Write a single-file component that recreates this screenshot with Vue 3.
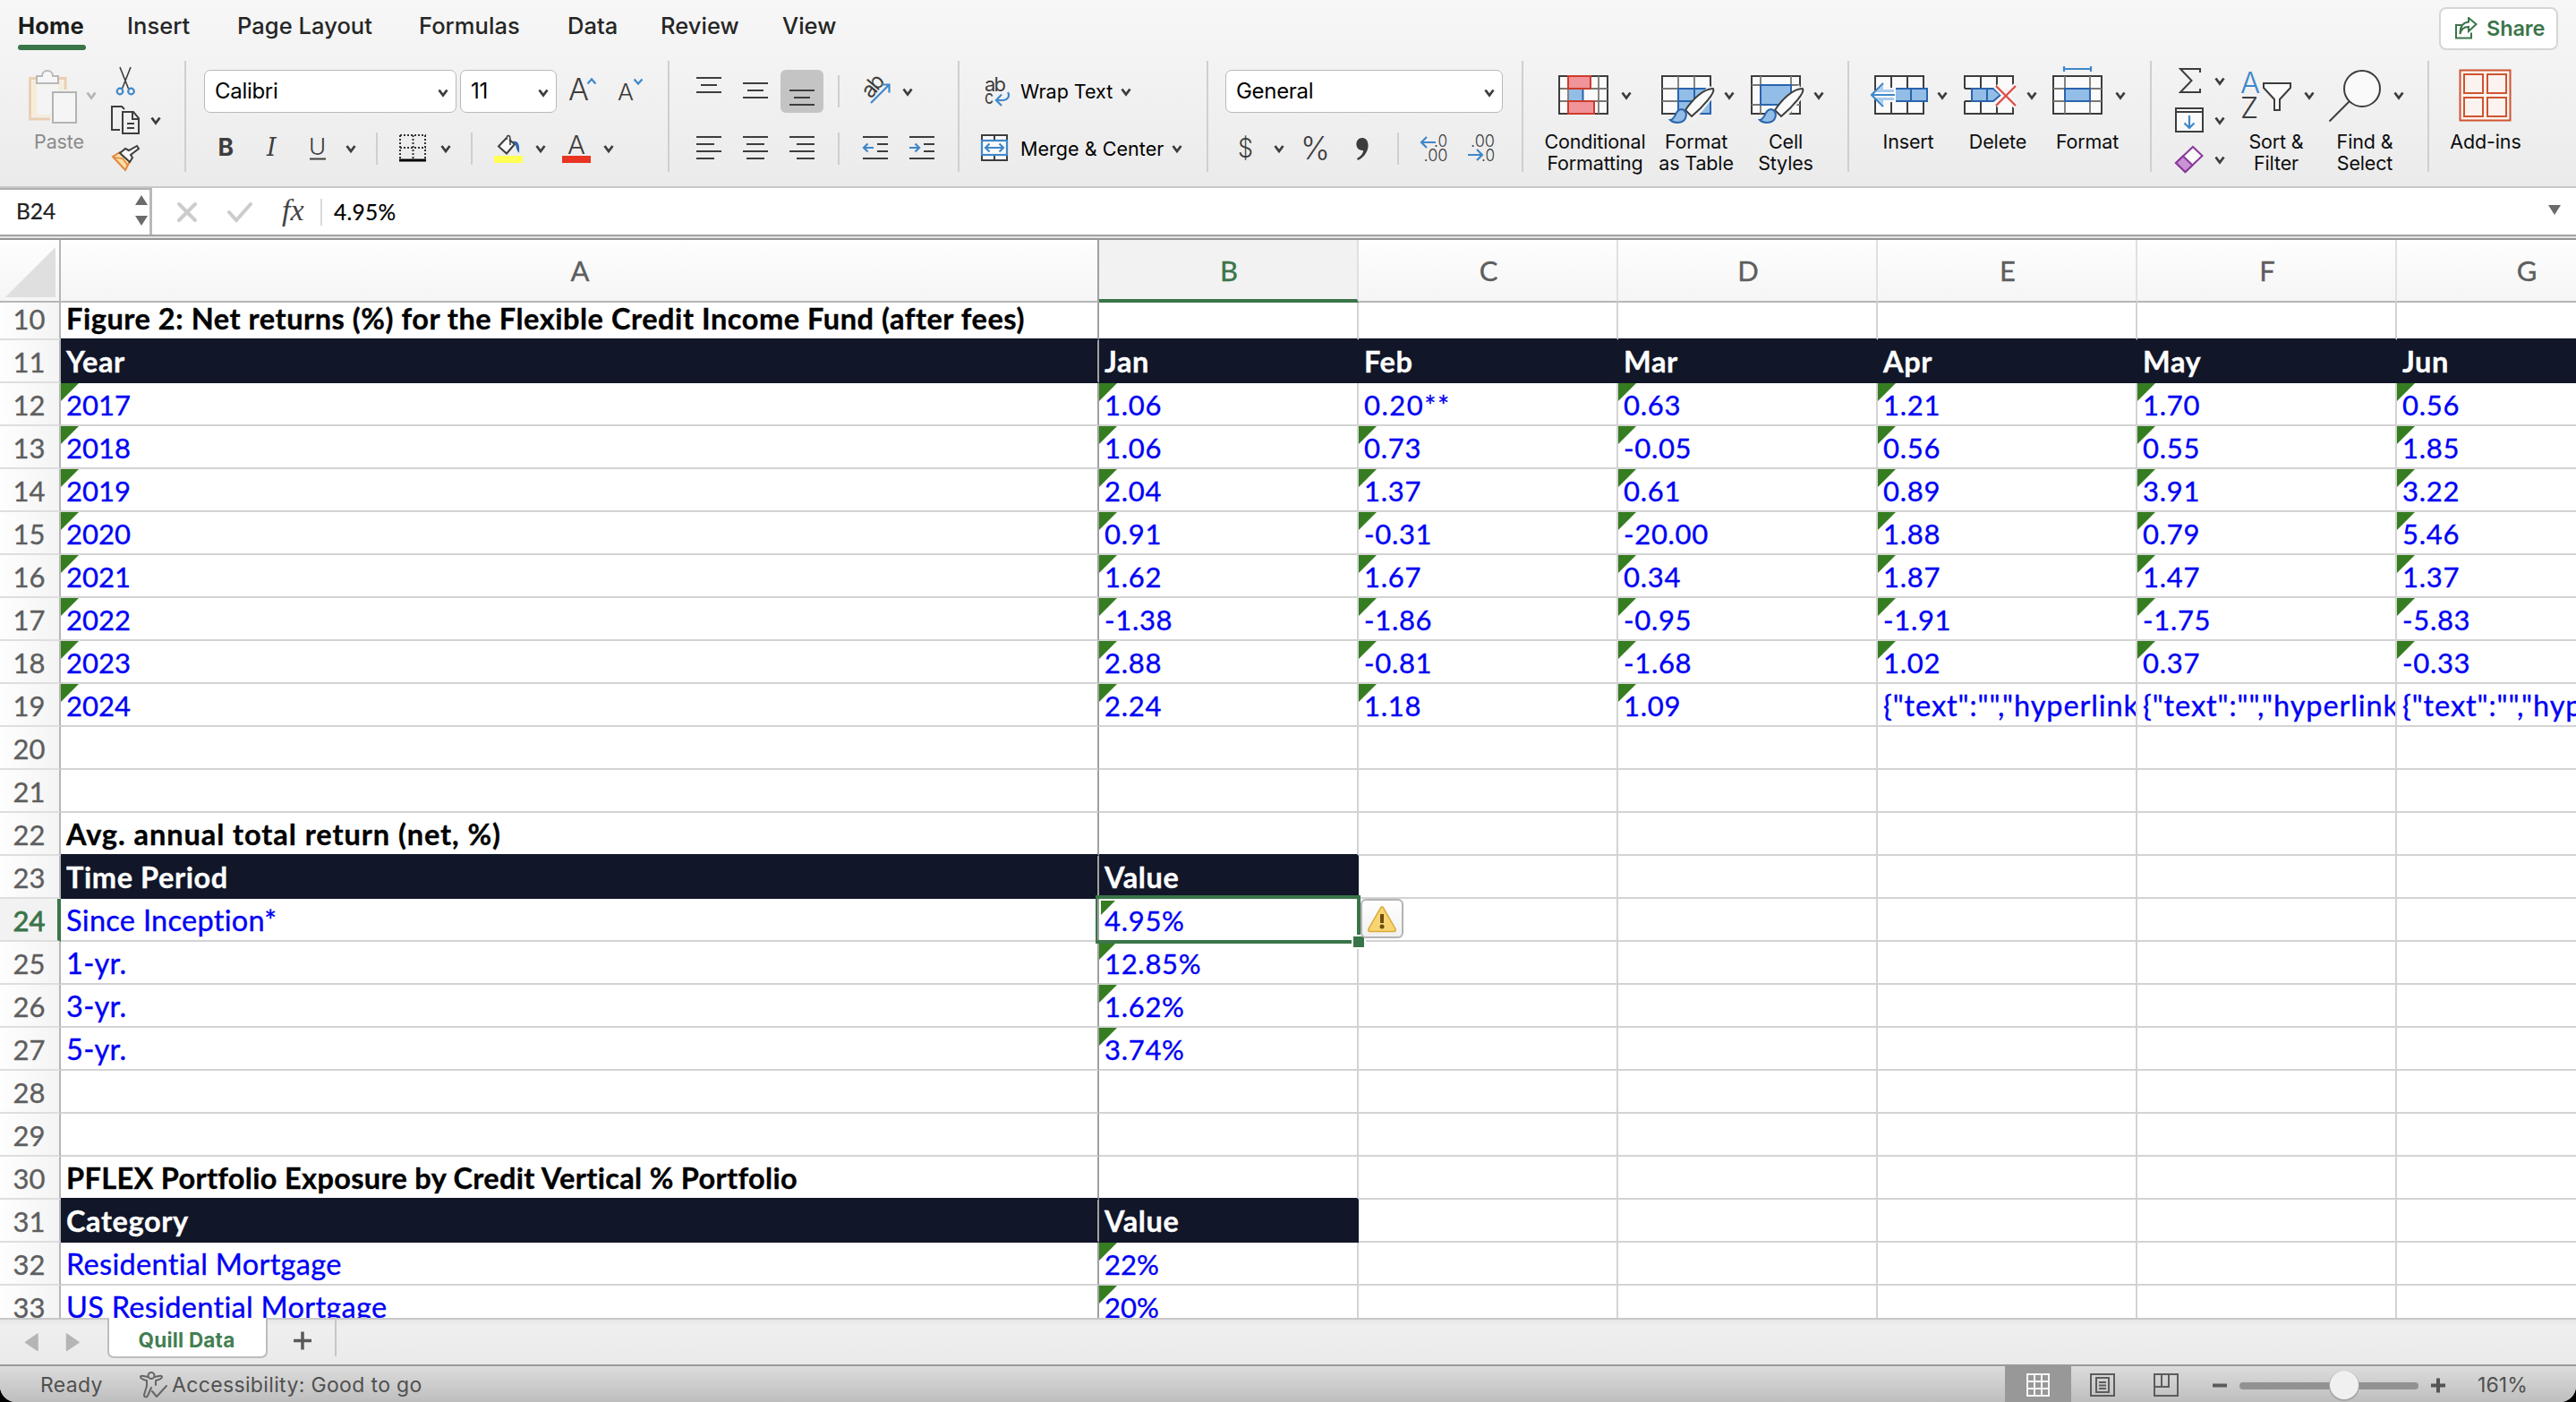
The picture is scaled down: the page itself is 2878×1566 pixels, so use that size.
<script setup>
import { h } from 'vue'

// Icon cell: the box is "x y width height" in toolbar coordinates
const Ico = (props, { slots }) => {
  const [, , width, height] = props.box.split(' ')
  return h('svg', { viewBox: props.box, width, height }, slots.default?.())
}
Ico.props = ['box']

const chev = (x, y) => `M${x + 1.5} ${y + 1}l4.5 6 4.5-6`

const tabs = ['Home', 'Insert', 'Page Layout', 'Formulas', 'Data', 'Review', 'View']
const columns = ['A', 'B', 'C', 'D', 'E', 'F', 'G']
const link = '{"text":"","hyperlink":""}'

const content = {
  10: ['Figure 2: Net returns (%) for the Flexible Credit Income Fund (after fees)'],
  11: ['Year', 'Jan', 'Feb', 'Mar', 'Apr', 'May', 'Jun'],
  12: ['2017', '1.06', '0.20**', '0.63', '1.21', '1.70', '0.56'],
  13: ['2018', '1.06', '0.73', '-0.05', '0.56', '0.55', '1.85'],
  14: ['2019', '2.04', '1.37', '0.61', '0.89', '3.91', '3.22'],
  15: ['2020', '0.91', '-0.31', '-20.00', '1.88', '0.79', '5.46'],
  16: ['2021', '1.62', '1.67', '0.34', '1.87', '1.47', '1.37'],
  17: ['2022', '-1.38', '-1.86', '-0.95', '-1.91', '-1.75', '-5.83'],
  18: ['2023', '2.88', '-0.81', '-1.68', '1.02', '0.37', '-0.33'],
  19: ['2024', '2.24', '1.18', '1.09', link, link, link],
  22: ['Avg. annual total return (net, %)'],
  23: ['Time Period', 'Value'],
  24: ['Since Inception*', '4.95%'],
  25: ['1-yr.', '12.85%'],
  26: ['3-yr.', '1.62%'],
  27: ['5-yr.', '3.74%'],
  30: ['PFLEX Portfolio Exposure by Credit Vertical % Portfolio'],
  31: ['Category', 'Value'],
  32: ['Residential Mortgage', '22%'],
  33: ['US Residential Mortgage', '20%'],
}
const titles = { 10: 'title', 22: 'title loose', 30: 'title tight' }
const heads = { 11: 7, 23: 2, 31: 2 }

const kind = (text) => {
  if (text === link) return 'link'
  if (text.endsWith('**')) return 'noted'
  if (/^-?\d*\.\d+%?$/.test(text)) return 'dec'
  return /^\d+%?$/.test(text) ? 'int' : 'words'
}

const rows = Array.from({ length: 24 }, (_, i) => {
  const n = i + 10
  return {
    n,
    title: titles[n],
    cells: columns.map((_, c) => {
      const text = content[n]?.[c] ?? ''
      return {
        text,
        kind: kind(text),
        dark: c < (heads[n] ?? 0),
        above: c < (heads[n + 1] ?? 0),
        flag: /^-?[\d.]+%?$/.test(text),
        active: n === 24 && c === 1,
      }
    }),
  }
})
</script>

<template>
  <div class="window">
    <header class="top">
      <nav class="tabs">
        <span v-for="(t, i) in tabs" :key="t" :class="{ on: i === 0 }">{{ t }}</span>
      </nav>
      <button class="share">
        <Ico box="2743 20 26 26">
          <path class="g" d="M2750 29h-6v14.500h17v-6" />
          <path class="g" d="M2748.500 39c1-6 4-8 9.500-8v5l8.500-8-8.500-7v4.500c-7 .5-9.500 6-9.500 13.500z" />
        </Ico>
        <span>Share</span>
      </button>
    </header>

    <div class="ribbon">
      <section class="group g1">
        <div class="big paste">
          <Ico box="0 68 112 78">
            <path d="M36 90h34v10H58v30H36z" fill="#f7ecd8" />
            <path d="M41 87.500h-7.500V133H56M65 87.500h8V100" fill="none" stroke="#ebcfb0" stroke-width="3" />
            <rect x="41" y="92" width="24" height="36" fill="#f4f4f4" />
            <path d="M41 93v-8h6c0-8 12-8 12 0h6v8z" fill="#f6f6f6" stroke="#b9b9b9" stroke-width="2" />
            <rect x="59" y="103" width="26" height="34" fill="#f5f5f5" stroke="#b3b3b3" stroke-width="2" />
            <path class="ch off" :d="chev(96, 102.5)" />
          </Ico>
          <span>Paste</span>
        </div>
        <div class="stack">
          <Ico box="112 68 94 44">
            <path class="k" d="M134 75l9.500 24M146 75l-9.500 24" />
            <circle class="b" cx="134" cy="102" r="3.300" /><circle class="b" cx="146.500" cy="102" r="3.300" />
          </Ico>
          <Ico box="112 112 94 44">
            <path class="k w" d="M134 145h-9v-26h11l3 3M137 125h12l6 7v17h-18zM148 125v8h7M142 138h8M142 143h8" />
            <path class="ch" :d="chev(168, 130.500)" />
          </Ico>
          <Ico box="112 156 94 38">
            <path d="M126 175l14 15 6-12-12-8z" fill="#f9dfa6" stroke="#e3873c" stroke-width="2" />
            <path d="M127 176l10 1 6 8" fill="none" stroke="#e3873c" stroke-width="1.500" />
            <path d="M134 171l11 10 3-5-2-3 9-7-2-3-9 5-4-2z" class="k w" fill="#fafafa" />
          </Ico>
        </div>
      </section>

      <section class="group g2">
        <div class="row">
          <div class="select font"><span>Calibri</span><Ico box="484 78 22 46"><path class="ch" :d="chev(489, 98.500)" /></Ico></div>
          <div class="select size"><span>11</span><Ico box="596 78 22 46"><path class="ch" :d="chev(601, 98.500)" /></Ico></div>
          <Ico box="622 78 124 48">
            <text x="635" y="112" font-size="34" textLength="23" lengthAdjust="spacingAndGlyphs" class="lt">A</text>
            <path class="b" d="M656.500 93.500l4.500-5 4.500 5" />
            <text x="690" y="112" font-size="26" class="lt" textLength="18" lengthAdjust="spacingAndGlyphs">A</text>
            <path class="b" d="M708.500 88.500l4.500 5 4.500-5" />
          </Ico>
        </div>
        <div class="row">
          <Ico box="208 142 70 48"><text x="243.500" y="174" font-size="26.500" font-weight="700">B</text></Ico>
          <Ico box="278 142 50 48"><text x="298" y="174" font-size="27" class="se" font-style="italic">I</text></Ico>
          <Ico box="328 142 76 48">
            <text x="345" y="172.500" font-size="26" class="lt">U</text><path class="k w" d="M346 177.500h18" />
            <path class="ch" :d="chev(386, 162)" />
          </Ico>
          <Ico box="404 142 112 48">
            <path class="sep" d="M421 148v36" />
            <path d="M447 151h29M447 165h29M447 151v26M461.500 151v26M475 151v26" fill="none" stroke="#333" stroke-width="2" stroke-dasharray="2 2" />
            <path d="M446 179h30" stroke="#000" stroke-width="3" />
            <path class="ch" :d="chev(492, 162)" />
          </Ico>
          <Ico box="516 142 108 48">
            <path class="sep" d="M527 148v36" />
            <path class="k w" d="M566 154l-9 9.500 9 8 9-10.500-6-5" fill="#fafafa" />
            <path class="k" d="M566 156c0-6 4-6 4 0v6" />
            <path d="M573 158c5-1 8 2 7 13-3-3-3-6-4-9z" fill="#2a64ad" />
            <rect x="552" y="174" width="32" height="8" fill="#ffff54" />
            <path class="ch" :d="chev(598, 162)" />
          </Ico>
          <Ico box="624 142 122 48">
            <text x="634" y="172" font-size="29" class="lt" textLength="20" lengthAdjust="spacingAndGlyphs">A</text>
            <rect x="628" y="174" width="32" height="8" fill="#e93323" />
            <path class="ch" :d="chev(674, 162)" />
          </Ico>
        </div>
      </section>

      <section class="group g3">
        <div class="row">
          <Ico box="748 78 70 48"><path class="k w" d="M778 87h28M783 95h18M778 103h28" /></Ico>
          <Ico box="818 78 54 48"><path class="k w" d="M830 93h28M835 101h18M830 109h28" /></Ico>
          <Ico box="872 78 48 48" class="pressed"><path class="k w" d="M882 101h28M887 109h18M882 117h28" /></Ico>
          <Ico box="920 78 150 48">
            <path class="sep" d="M937 84v36" />
            <text transform="translate(973 111) rotate(-50)" font-size="24" textLength="26" class="md">ab</text>
            <path class="b" d="M973 115l20-20M985 94.500h8.500v9" />
            <path class="ch" :d="chev(1008, 98.500)" />
          </Ico>
        </div>
        <div class="row">
          <Ico box="748 142 70 48"><path class="k w" d="M778 153h28M778 161h20M778 169h28M778 177h20" /></Ico>
          <Ico box="818 142 54 48"><path class="k w" d="M830 153h28M834 161h20M830 169h28M834 177h20" /></Ico>
          <Ico box="872 142 48 48"><path class="k w" d="M882 153h28M890 161h20M882 169h28M890 177h20" /></Ico>
          <Ico box="920 142 82 48">
            <path class="sep" d="M937 148v36" />
            <path class="k w" d="M964 153h28M980 161h12M980 169h12M964 177h28" />
            <path class="b" d="M976 165h-11M969.500 160.500l-4.500 4.500 4.500 4.500" />
          </Ico>
          <Ico box="1002 142 68 48">
            <path class="k w" d="M1016 153h28M1032 161h12M1032 169h12M1016 177h28" />
            <path class="b" d="M1016 165h11M1022.500 160.500l4.500 4.500-4.500 4.500" />
          </Ico>
        </div>
      </section>

      <section class="group g4">
        <div class="row">
          <Ico box="1072 78 68 48">
            <text x="1100" y="101.500" font-size="22" class="md" textLength="24">ab</text>
            <text x="1100" y="116" font-size="22" class="md" textLength="10" lengthAdjust="spacingAndGlyphs">c</text>
            <path class="b" d="M1126 103c3 5-1 9-6 9h-7M1119 105.500l-6 6.500 6 6" />
          </Ico>
          <span class="txt wrap">Wrap Text</span>
          <Ico box="1247 78 24 48"><path class="ch" :d="chev(1252, 98.500)" /></Ico>
        </div>
        <div class="row">
          <Ico box="1072 142 68 48">
            <path class="k w" d="M1097 151h28v28h-28zM1111 151v28" fill="#fafafa" />
            <rect x="1097" y="157" width="28" height="16" class="b" fill="#fafafa" />
            <path class="b" d="M1101 165h20M1105.500 160.500l-4.500 4.500 4.500 4.500M1116.500 160.500l4.500 4.500-4.500 4.500" />
          </Ico>
          <span class="txt merge">Merge &amp; Center</span>
          <Ico box="1304 142 24 48"><path class="ch" :d="chev(1309, 162)" /></Ico>
        </div>
      </section>

      <section class="group g5">
        <div class="row">
          <div class="select num"><span>General</span><Ico box="1653 78 22 46"><path class="ch" :d="chev(1658, 98.500)" /></Ico></div>
        </div>
        <div class="row">
          <Ico box="1350 142 94 48">
            <text x="1383" y="176" font-size="30" class="lt" textLength="17" lengthAdjust="spacingAndGlyphs">$</text>
            <path class="ch" :d="chev(1423, 162)" />
          </Ico>
          <Ico box="1444 142 60 48"><text x="1453" y="178" font-size="35" class="lt" textLength="33" lengthAdjust="spacingAndGlyphs">%</text></Ico>
          <Ico box="1504 142 44 48"><path d="M1522 154c9 0 10 18-5 25l-1-2c5-3 7-6 7-9-10 1-10-14-1-14z" fill="#3d3d3d" /></Ico>
          <Ico box="1548 142 80 48">
            <path class="sep" d="M1562 148v36" />
            <text x="1617" y="163.500" text-anchor="end" font-size="18.500" class="lt" textLength="15" lengthAdjust="spacingAndGlyphs">.0</text>
            <text x="1617.500" y="180" text-anchor="end" font-size="18.500" class="lt" textLength="27" lengthAdjust="spacingAndGlyphs">.00</text>
            <path class="b" d="M1604 159h-16M1594 153l-6 6 6 6" />
          </Ico>
          <Ico box="1628 142 72 48">
            <text x="1670" y="163.500" text-anchor="end" font-size="18.500" class="lt" textLength="27" lengthAdjust="spacingAndGlyphs">.00</text>
            <text x="1670" y="180" text-anchor="end" font-size="18.500" class="lt" textLength="15" lengthAdjust="spacingAndGlyphs">.0</text>
            <path class="b" d="M1640 173h16M1650 167l6 6-6 6" />
          </Ico>
        </div>
      </section>

      <section class="group g6">
        <div class="big cond">
          <Ico box="1712 68 140 78">
            <rect x="1742" y="85" width="54" height="42" class="k w" fill="#fafafa" />
            <path class="gr" d="M1752 85v42M1786 85v42M1743 99h53M1743 113h53" />
            <rect x="1769" y="100" width="16" height="12" fill="#fafafa" />
            <rect x="1753" y="100" width="15" height="12" fill="#92bde7" /><path d="M1768.500 99v14" stroke="#2a64ad" stroke-width="2" />
            <rect x="1752" y="85" width="25" height="14" class="rd" /><rect x="1752" y="113" width="29" height="14" class="rd" />
            <path class="ch" :d="chev(1811, 102.500)" />
          </Ico>
          <span>Conditional<br>Formatting</span>
        </div>
        <div class="big astable">
          <Ico box="1850 68 90 78">
            <rect x="1857" y="85" width="54" height="42" class="k w" fill="#fafafa" />
            <path class="gr" d="M1875 85v42M1893 85v42M1857 99h54M1857 113h54" />
            <path d="M1875 99h36v28h-36zM1893 99v28M1875 113h36" class="bl" />
            <path class="halo" d="M1914 99l-27 33" />
            <path class="k w" d="M1883 123c8-12 20-24 31-24 3 4-11 20-24 31z" fill="#fafafa" />
            <path d="M1866 134c7-1 5-12 13-12 8 2 6 15-5 15-4 0-7-2-8-3z" class="bl" />
            <path class="ch" :d="chev(1926, 102.500)" />
          </Ico>
          <span>Format<br>as Table</span>
        </div>
        <div class="big styles">
          <Ico box="1950 68 90 78">
            <rect x="1957" y="85" width="54" height="42" class="k w" fill="#fafafa" />
            <path class="gr" d="M1967 85v42M2001 85v42M1957 95h54M1957 117h54" />
            <path d="M1967 95h34v22h-34z" class="bl" />
            <path class="halo" d="M2014 99l-27 33" />
            <path class="k w" d="M1983 123c8-12 20-24 31-24 3 4-11 20-24 31z" fill="#fafafa" />
            <path d="M1966 134c7-1 5-12 13-12 8 2 6 15-5 15-4 0-7-2-8-3z" class="bl" />
            <path class="ch" :d="chev(2026, 102.500)" />
          </Ico>
          <span>Cell<br>Styles</span>
        </div>
      </section>

      <section class="group g7">
        <div class="big">
          <Ico box="2082 68 100 78">
            <path d="M2095 85h54v42h-54zM2113 85v42M2131 85v42" class="k w" fill="#fafafa" />
            <path d="M2104 99h49v14h-49zM2117 99v14M2135 99v14" class="bl" />
            <path d="M2091 106l14-13v6h12v14h-12v6z" fill="#a9cbee" stroke="#fafafa" stroke-width="2" />
            <path d="M2117 106h-24" stroke="#fafafa" stroke-width="6" />
            <path class="b" d="M2117 106h-26M2104 93l-13 13 13 13" />
            <path class="ch" :d="chev(2164, 102.500)" />
          </Ico>
          <span>Insert</span>
        </div>
        <div class="big">
          <Ico box="2182 68 100 78">
            <path d="M2195 99V85h54v14M2195 113v14h54v-14M2213 85v14M2231 85v14M2213 113v14M2231 113v14M2195 99h8M2195 113h8" class="k w" fill="#fafafa" />
            <path d="M2203 99h24l8 7-8 7h-24zM2220 99v14" class="bl" />
            <path d="M2230 96l22 22M2252 96l-22 22" stroke="#f6f6f6" stroke-width="7" />
            <path d="M2230 96l22 22M2252 96l-22 22" stroke="#dd4b45" stroke-width="2.300" />
            <path class="ch" :d="chev(2264, 102.500)" />
          </Ico>
          <span>Delete</span>
        </div>
        <div class="big">
          <Ico box="2283 68 100 78">
            <path d="M2295 85h54v42h-54z" class="k w" fill="#fafafa" />
            <path class="gr" d="M2308 85v42M2336 85v42M2295 99h54M2295 113h54" />
            <path d="M2308 99h28v14h-28z" class="bl" />
            <path class="b" d="M2307 77h30M2307 74v6M2337 74v6" />
            <path class="ch" :d="chev(2364, 102.500)" />
          </Ico>
          <span>Format</span>
        </div>
      </section>

      <section class="group g8">
        <div class="stack">
          <Ico box="2404 68 90 44">
            <path class="k w" d="M2458 81v-4h-22l12.500 13-12.500 13h22v-4" />
            <path class="ch" :d="chev(2474, 86.500)" />
          </Ico>
          <Ico box="2404 112 90 44">
            <path class="k w" d="M2431 121h30v26h-30zM2431 125h30" fill="#fafafa" />
            <path class="b" d="M2446 129v14M2440.500 137.500l5.500 5.500 5.500-5.500" />
            <path class="ch" :d="chev(2474, 130.500)" />
          </Ico>
          <Ico box="2404 156 90 44">
            <path d="M2431 182l19-18 10.500 10-19 18z" fill="#fafafa" stroke="#8a3a9c" stroke-width="2" />
            <path d="M2431 182l8-7.500 10.500 10-8 7.500z" fill="#c993d4" stroke="#8a3a9c" stroke-width="2" />
            <path class="ch" :d="chev(2474, 174.500)" />
          </Ico>
        </div>
        <div class="big sort">
          <Ico box="2494 68 98 78">
            <text x="2503" y="104" font-size="33" class="lt blue" textLength="22" lengthAdjust="spacingAndGlyphs">A</text>
            <text x="2503" y="132" font-size="33" class="lt" textLength="20" lengthAdjust="spacingAndGlyphs">Z</text>
            <path class="k w" d="M2529 93h30v5l-12 13v12h-6v-12l-12-13z" fill="#fafafa" />
            <path class="ch" :d="chev(2574, 102.500)" />
          </Ico>
          <span>Sort &amp;<br>Filter</span>
        </div>
        <div class="big find">
          <Ico box="2592 68 100 78">
            <circle cx="2639" cy="99" r="20" class="k w" fill="#fafafa" />
            <path class="k w" d="M2624.500 113.500l-22 22" />
            <path class="ch" :d="chev(2674, 102.500)" />
          </Ico>
          <span>Find &amp;<br>Select</span>
        </div>
      </section>

      <section class="group g9">
        <div class="big">
          <Ico box="2727 68 100 78">
            <g fill="#fbf3ef" stroke="#cf5430" stroke-width="2">
              <rect x="2748.500" y="78.500" width="56" height="56" />
              <rect x="2753" y="83" width="21" height="21" /><rect x="2779" y="83" width="21" height="21" />
              <rect x="2753" y="109" width="21" height="21" /><rect x="2779" y="109" width="21" height="21" />
            </g>
          </Ico>
          <span>Add-ins</span>
        </div>
      </section>
    </div>

    <div class="formula">
      <div class="namebox">
        <span>B24</span>
        <Ico box="149 212 18 48"><path d="M151 229h14l-7-11zM151 241h14l-7 11z" fill="#6b6b6b" /></Ico>
      </div>
      <Ico box="170 212 134 52">
        <path d="M200 230l18 18M218 230l-18 18" class="dis" />
        <path d="M256 239l8 9 16-18" class="dis" />
      </Ico>
      <span class="fx">fx</span>
      <span class="value">4.95%</span>
      <Ico box="2840 212 28 52"><path d="M2847 231h14l-7 11z" fill="#6b6b6b" /></Ico>
    </div>
    <div class="rule"></div>

    <div class="sheet">
      <div class="line heads">
        <div class="corner"><Ico box="0 268 66 68"><path d="M6 332h56v-56z" fill="#dfdfdf" /></Ico></div>
        <div v-for="(c, i) in columns" :key="c" class="colhead" :class="{ sel: i === 1, a: i === 0 }">{{ c }}</div>
      </div>
      <div class="body">
        <div v-for="r in rows" :key="r.n" class="line">
          <div class="rowhead" :class="{ sel: r.n === 24 }">{{ r.n }}</div>
          <div
            v-for="(c, i) in r.cells"
            :key="i"
            class="cell"
            :class="[r.title, c.kind, { a: i === 0, dark: c.dark, above: c.above, flag: c.flag, active: c.active }]"
          >
            <span>{{ c.text }}</span>
            <template v-if="c.active">
              <i class="frame"></i><i class="handle"></i>
              <div class="warn">
                <Ico box="1522 1005 44 42">
                  <path d="M1542.500 1013q1.500-2.500 3 0l13.500 23.500q1 3-2 3h-26q-3 0-2-3z" fill="#f8d570" stroke="#dba93c" stroke-width="1.500" />
                  <path d="M1542 1020h4v10h-4z" fill="#6d4d10" /><circle cx="1544" cy="1034" r="2.500" fill="#6d4d10" />
                </Ico>
              </div>
            </template>
          </div>
        </div>
      </div>
    </div>

    <div class="sheettabs">
      <Ico box="0 1474 120 50">
        <path d="M42 1490v18.500l-13.500-9.200zM74.500 1490v18.500l13.500-9.200z" fill="#b5b5b5" stroke="#b5b5b5" stroke-width="1.500" stroke-linejoin="round" />
      </Ico>
      <span class="tab">Quill Data</span>
      <Ico box="299 1474 79 50">
        <path d="M328 1497.500h20M338 1487.500v20" stroke="#5a5a5a" stroke-width="3.500" />
        <path d="M375 1474v41" stroke="#c6c6c6" stroke-width="2" />
      </Ico>
    </div>

    <footer class="status">
      <span class="ready">Ready</span>
      <Ico box="154 1526 37 40">
        <g fill="none" stroke="#666" stroke-width="2" stroke-linejoin="round" stroke-linecap="round">
          <circle cx="169" cy="1536.500" r="3.500" />
          <path d="M165 1538c-5-1-8-2-8 0s3 3 7 4v6l-3 10c0 3 3 3 4 1l4-9M173 1538c5-1 8-2 8 0s-3 3-7 4v5M170 1554l5 6 11-12" />
        </g>
      </Ico>
      <span class="acc">Accessibility: Good to go</span>
      <div class="view on">
        <Ico box="2264 1533 26 28"><path d="M2265 1535h24v24h-24zM2273 1535v24M2281 1535v24M2265 1543h24M2265 1551h24" fill="none" stroke="#f5f5f5" stroke-width="2" /></Ico>
      </div>
      <Ico box="2314 1526 188 40">
        <g fill="none" stroke="#5c5c5c" stroke-width="2">
          <path d="M2336 1535h26v24h-26zM2342 1539h14v16h-14zM2345 1544h8M2345 1547.500h8M2345 1551h8" />
          <path d="M2407 1535h26v24h-26zM2407 1549h16v-14M2415 1535v14" />
          <path d="M2472 1547.500h16" stroke-width="4" />
        </g>
      </Ico>
      <Ico box="2502 1526 200 40">
        <rect x="2502" y="1544" width="200" height="8" rx="4" fill="#929292" />
        <circle cx="2619" cy="1548" r="17" fill="#a5a5a5" /><circle cx="2619" cy="1547" r="16" fill="#f0f0f0" />
      </Ico>
      <Ico box="2702 1526 46 40"><path d="M2716 1547.500h16M2724 1539.500v16" stroke="#555" stroke-width="4" /></Ico>
      <span class="pct">161%</span>
    </footer>
  </div>
</template>

<style>
html, body { background: #000; overflow: hidden; }
</style>

<style scoped>
* { box-sizing: border-box; }
.window {
  width: 2878px; height: 1566px; overflow: hidden; display: flex; flex-direction: column;
  font-family: Inter, sans-serif; color: #111; background: linear-gradient(#f7f7f7, #ebebeb 208px);
  border-radius: 0 0 18px 18px;
}
svg { display: block; flex: none; }
svg text { fill: #3d3d3d; font-family: Inter, sans-serif; }
svg text.lt { font-weight: 300; }
svg text.md { font-weight: 400; }
svg text.se { font-family: "DejaVu Serif", serif; }
svg text.blue { fill: #3f87c9; }
.k { stroke: #3d3d3d; stroke-width: 1.6; }
.k:not([fill]) { fill: none; }
.w { stroke-width: 2; }
.b { stroke: #3f87c9; stroke-width: 2.2; }
.b:not([fill]) { fill: none; }
.g { stroke: #3a7549; stroke-width: 2; fill: none; }
.gr { stroke: #7b7872; stroke-width: 1.8; fill: none; }
.bl { stroke: #2a64ad; stroke-width: 2; fill: #92bde7; }
.rd { stroke: #cf3a2b; stroke-width: 2; fill: #f09499; }
.halo { stroke: #f4f4f4; stroke-width: 13; fill: none; }
.ch { stroke: #3d3d3d; stroke-width: 2.8; fill: none; }
.ch.off { stroke: #b4b4b4; }
.sep { stroke: #cfcfcf; stroke-width: 2; }
.dis { stroke: #cccccc; stroke-width: 4; fill: none; stroke-linecap: round; }

.top { height: 68px; display: flex; justify-content: space-between; flex: none; }
.tabs {
  display: grid; grid-template-columns: 122px 123px 203px 166px 104px 136px 100px;
  margin-left: 20px; font-size: 25.5px; font-weight: 500; line-height: 57px; color: #262626; letter-spacing: .05px;
}
.tabs .on { font-weight: 700; color: #1c1c1c; letter-spacing: .2px; }
.tabs .on::after { content: ""; display: block; width: 76px; height: 6px; margin: -7px 0 0; border-radius: 3px; background: #3a7549; }
.share {
  width: 133px; height: 48px; margin: 8px 20px 0 0; padding: 0 0 0 16px; display: flex; align-items: center; gap: 9px;
  border: 2px solid #d6d6d6; border-radius: 8px; background: #fff; color: #3a7549;
  font: 600 23.5px/44px Inter, sans-serif; letter-spacing: -.1px;
}

.ribbon { height: 140px; display: flex; flex: none; }
.group { height: 124px; border-right: 2px solid #cfcfcf; flex: none; }
.row { height: 48px; display: flex; }
.row:first-child { margin: 10px 0 16px; }
.g1 { width: 208px; display: flex; }
.g2 { width: 540px; }
.g3 { width: 324px; }
.g4 { width: 278px; }
.g5 { width: 352px; }
.g6 { width: 364px; display: flex; padding-left: 10px; }
.g7 { width: 338px; display: flex; padding-left: 16px; }
.g8 { width: 310px; display: flex; }
.g9 { border: 0; padding-left: 13px; }
.g2 .row:first-child { gap: 4px; }
.big { display: flex; flex-direction: column; align-items: flex-start; font-size: 21.5px; line-height: 24px; letter-spacing: -.15px; color: #0d0d0d; }
.big span { width: 100%; text-align: center; }
.paste { color: #8b8b8b; }
.paste span { padding-left: 20px; }
.cond { margin-right: -2px; }
.astable { width: 100px; }
.astable span { width: 90px; }
.select {
  height: 48px; display: flex; justify-content: space-between; padding: 0 3px 0 11px; border: 1.5px solid #b9b9b9;
  border-radius: 7px; background: #fff; font-size: 24px; line-height: 46px; letter-spacing: -.3px; color: #000;
}
.font { width: 282px; margin-left: 20px; }
.size { width: 108px; }
.g2 .row:first-child > svg { margin-left: -4px; }
.num { width: 310px; margin-left: 19px; }
.pressed { border-radius: 6px; background: #c4c4c4; }
.txt { font-size: 21.5px; line-height: 48px; color: #000; white-space: nowrap; }
.wrap { width: 107px; }
.merge { width: 164px; letter-spacing: .05px; }

.formula { height: 54px; display: flex; flex: none; border-top: 2px solid #c8c8c8; background: #fff; font-family: Lato, sans-serif; }
.namebox {
  width: 170px; height: 52px; display: flex; justify-content: space-between; border-top: 2px solid #b0b0b0; border-right: 3px solid #b9b9b9;
  padding-left: 18px; font-size: 24.5px; line-height: 48px; color: #222; -webkit-text-stroke: .2px;
}
.fx { width: 56px; height: 30px; margin-top: 12px; padding-left: 11px; border-right: 2px solid #d9d9d9; font: italic 34px/26px "Liberation Serif", serif; color: #444; }
.value { flex: 1; padding-left: 13px; font-size: 24.5px; line-height: 53px; letter-spacing: .3px; color: #000; -webkit-text-stroke: .2px; }
.formula > svg:last-child { margin-right: 10px; }
.rule { height: 6px; flex: none; background: linear-gradient(#a2a2a2 2px, #e4e4e4 2px 4px, #969696 4px); }

.sheet { height: 1204px; flex: none; overflow: hidden; background: #fff; font: 31px/48px Lato, sans-serif; -webkit-text-stroke: .35px; }
.line { display: grid; grid-template: 100% / 68px 1160px repeat(6, 290px); height: 48px; }
.heads { height: 70px; line-height: 68px; color: #5e5e5e; text-align: center; background: linear-gradient(#fefefe, #f5f5f5); }
.corner { border-right: 2px solid #b6b6b6; border-bottom: 2px solid #b6b6b6; }
.colhead { border-right: 2px solid #e0e0e0; border-bottom: 2px solid #b6b6b6; padding-left: 2px; }
.colhead.a { border-right-color: #a0a0a0; }
.colhead.sel { color: #3a7549; background: #f2f2f2; border-bottom: 4px solid #3a7549; }
.body { height: 1134px; overflow: hidden; }
.body .line:first-child { margin-top: -6px; }
.rowhead {
  color: #5e5e5e; text-align: center; border-right: 2px solid #b6b6b6; border-bottom: 2px solid #dedede; padding-right: 1px;
  background: linear-gradient(90deg, #fefefe, #f4f4f4);
}
.rowhead.sel { color: #3a7549; -webkit-text-stroke: .8px; background: #f2f2f2; border-right: 4px solid #3a7549; padding: 0 0 0 1px; }
.cell { position: relative; border: 0 solid #d3d3d3; border-width: 0 2px 2px 0; color: #0000f5; min-width: 0; }
.cell > span { display: block; overflow: hidden; white-space: nowrap; height: 46px; padding-left: 6px; }
.cell.words { font-size: 32.5px; letter-spacing: .3px; }
.cell.link { font-size: 32.5px; letter-spacing: .9px; }
.cell.dec { letter-spacing: .7px; }
.cell.noted { letter-spacing: 1.5px; }
.cell.a { border-right-color: #a0a0a0; }
.cell.title { color: #000; font-weight: 700; letter-spacing: .55px; }
.cell.loose { letter-spacing: .95px; }
.cell.tight { letter-spacing: .33px; }
.cell.above { border-bottom-color: #111628; }
.cell.dark { background: #111628; border-color: #111628; color: #fff; font-weight: 700; letter-spacing: .6px; }
.cell.dark.a { border-right-color: #a0a0a0; }
.cell.flag::before {
  content: ""; position: absolute; left: 0; top: 0; width: 20px; height: 20px; background: #367d21;
  clip-path: polygon(0 0, 100% 0, 0 100%);
}
.cell.flag > span { position: relative; }
.cell.active { z-index: 2; }
.cell.active::before { left: 2px; top: 2px; width: 16px; height: 16px; }
.frame { position: absolute; left: -4px; top: -4px; width: 296px; height: 54px; border: 4px solid #3a7549; border-left-width: 2px; }
.handle { position: absolute; left: 282px; top: 40px; width: 16px; height: 16px; background: #3a7549; border: 2px solid #fff; }
.warn {
  position: absolute; left: 292px; top: 0; width: 48px; height: 44px; border: 2px solid #b3b3b3; border-radius: 6px;
  background: linear-gradient(#fff, #f1f1f1);
}

.sheettabs { height: 54px; flex: none; display: flex; border-top: 2px solid #c8c8c8; border-bottom: 2px solid #999; background: linear-gradient(#e6e6e6, #efefef 8px, #eaeaea); }
.tab {
  width: 179px; height: 45px; margin-top: -2px; border: 2px solid #bdbdbd; border-top: 0; border-radius: 0 0 7px 7px; background: #fff;
  text-align: center; color: #437f53; font-weight: 700; font-size: 22.5px; line-height: 50px; letter-spacing: .2px; padding-right: 2px;
}
.status { height: 40px; flex: none; display: flex; background: linear-gradient(#dcdcdc, #bebebe); font-size: 23px; line-height: 42px; color: #505050; letter-spacing: .35px; }
.ready { width: 154px; padding-left: 45px; }
.acc { flex: 1; padding-left: 1px; }
.view { width: 74px; padding: 7px 0 0 24px; background: #989898; }
.pct { width: 130px; padding-left: 20px; letter-spacing: .1px; }
</style>
